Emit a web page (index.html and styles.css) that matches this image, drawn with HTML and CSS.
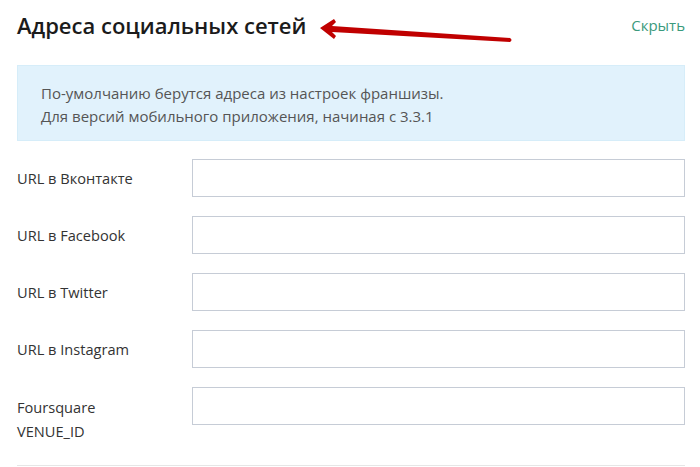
FILE: index.html
```html
<!DOCTYPE html>
<html lang="ru">
<head>
<meta charset="utf-8">
<link rel="stylesheet" href="styles.css">
</head>
<body>
<div class="panel">
  <div class="header">
    <h2 class="title">Адреса социальных сетей</h2>
    <svg class="arrow" width="200" height="30" viewBox="0 0 200 30">
      <path d="M0 9 L14 0 L16 3 L12 7 L190 19 Q193 21 190 23 L12 13 L16 17 L14 20 Z" fill="#c00000"/>
    </svg>
    <a class="hide" href="#">Скрыть</a>
  </div>
  <div class="info">
    <p>По-умолчанию берутся адреса из настроек франшизы.</p>
    <p>Для версий мобильного приложения, начиная с 3.3.1</p>
  </div>
  <div class="form">
    <div class="row"><label>URL в Вконтакте</label><input type="text"></div>
    <div class="row"><label>URL в Facebook</label><input type="text"></div>
    <div class="row"><label>URL в Twitter</label><input type="text"></div>
    <div class="row"><label>URL в Instagram</label><input type="text"></div>
    <div class="row top"><label>Foursquare<br>VENUE_ID</label><input type="text"></div>
  </div>
  <hr class="sep">
</div>
</body>
</html>
```
FILE: styles.css
```css
* { box-sizing: border-box; }
body {
  margin: 0;
  background: #fff;
  font-family: "Open Sans", "Noto Sans", sans-serif;
  color: #333;
}
.panel {
  padding: 0 15px 0 17px;
}
.header {
  display: flex;
  align-items: flex-start;
  height: 65px;
}
.title {
  margin: 10px 0 0 0;
  font-size: 22px;
  line-height: 30px;
  font-weight: 600;
  color: #1b1b1b;
  letter-spacing: 0;
}
.arrow {
  margin: 19px 0 0 14px;
  display: block;
}
.hide {
  margin: 13px 0 0 auto;
  font-size: 15px;
  line-height: 24px;
  color: #3a9a7c;
  text-decoration: none;
}
.info {
  background: #e1f2fc;
  border: 1px solid #d6edf9;
  padding: 16px 23px 12px;
  font-size: 15px;
  color: #555;
}
.info p {
  margin: 0;
  line-height: 23px;
}
.form {
  padding-top: 18px;
}
.row {
  display: flex;
  align-items: center;
  height: 38px;
  margin-bottom: 19px;
}
.row label {
  width: 175px;
  flex: none;
  font-size: 14.6px;
  color: #333;
  line-height: 24px;
}
.row input {
  flex: 1;
  height: 38px;
  border: 1px solid #c6ccd6;
  border-radius: 0;
  background: #fff;
}
.row.top {
  align-items: flex-start;
  height: auto;
  margin-bottom: 0;
}
.row.top label {
  padding-top: 8px;
}
.sep {
  margin: 22px 0 0;
  border: 0;
  border-top: 1px solid #e6e6e6;
}
```
